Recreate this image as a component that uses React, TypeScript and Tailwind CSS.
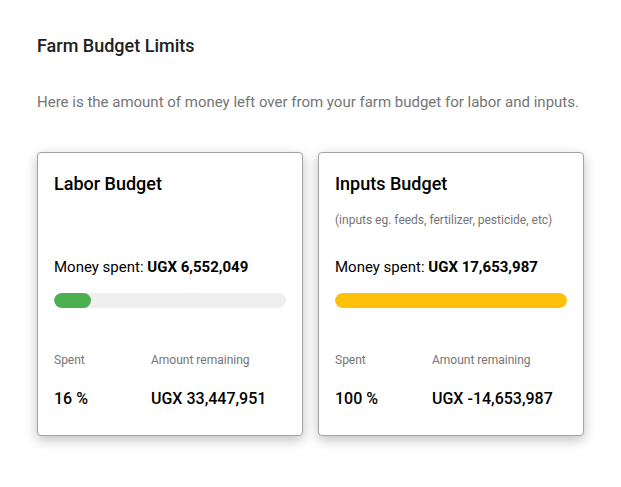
const cards = [
  {
    title: "Labor Budget",
    note: "",
    spent: "UGX 6,552,049",
    pct: 16,
    bar: "bg-[#4caf50]",
    remaining: "UGX 33,447,951",
  },
  {
    title: "Inputs Budget",
    note: "(inputs eg. feeds, fertilizer, pesticide, etc)",
    spent: "UGX 17,653,987",
    pct: 100,
    bar: "bg-[#ffc107]",
    remaining: "UGX -14,653,987",
  },
];

function BudgetCard({ c }: { c: (typeof cards)[number] }) {
  return (
    <div className="w-[266px] rounded border border-[#a3a3a3] bg-white px-4 pt-[19px] pb-[26px] shadow-[0_4px_12px_rgba(0,0,0,0.25)]">
      <h2 className="text-[18px] leading-6 font-medium text-black">{c.title}</h2>
      <p className="mt-[16px] h-4 text-[12px] leading-4 text-[#757575]">{c.note}</p>
      <p className="mt-[29px] text-[15px] leading-5 text-black">
        Money spent: <span className="font-bold">{c.spent}</span>
      </p>
      <div className="mt-[16px] h-[15px] rounded-full bg-[#efefef] overflow-hidden">
        <div className={`h-full rounded-full ${c.bar}`} style={{ width: `${c.pct}%` }} />
      </div>
      <div className="mt-[44px] grid grid-cols-[97px_1fr]">
        <p className="text-[12px] leading-4 text-[#757575]">Spent</p>
        <p className="text-[12px] leading-4 text-[#757575]">Amount remaining</p>
        <p className="mt-[21px] text-[16px] leading-5 font-medium text-black">{c.pct} %</p>
        <p className="mt-[21px] text-[16px] leading-5 font-medium text-black">{c.remaining}</p>
      </div>
    </div>
  );
}

export default function App() {
  return (
    <div className="min-h-screen bg-white px-[37px] pt-[34px] font-['Roboto',sans-serif]">
      <h1 className="text-[18px] leading-6 font-medium text-[#212121]">Farm Budget Limits</h1>
      <p className="mt-[34px] text-[15px] leading-5 text-[#757575]">
        Here is the amount of money left over from your farm budget for labor and inputs.
      </p>
      <div className="mt-[40px] flex gap-[15px]">
        {cards.map((c) => (
          <BudgetCard key={c.title} c={c} />
        ))}
      </div>
    </div>
  );
}
